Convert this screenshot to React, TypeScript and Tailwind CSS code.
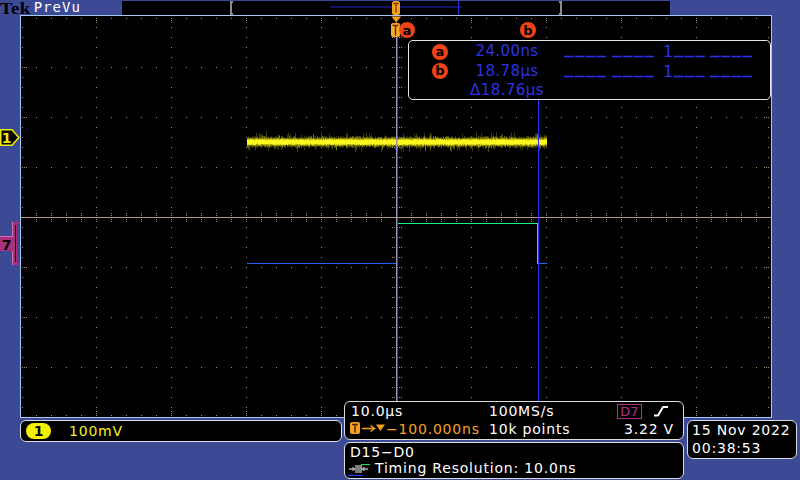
import React from 'react';

function lcg(seed: number) {
  let s = seed >>> 0;
  return () => {
    s = (Math.imul(s, 1664525) + 1013904223) >>> 0;
    return s / 4294967296;
  };
}

function buildGrid(): string {
  const parts: string[] = [];
  const dot = (x: number, y: number) => parts.push(`M${x} ${y}h1v1h-1z`);
  const majorCols = [96, 171, 246, 321, 471, 546, 621, 696];
  const majorRows = [67, 117, 167, 267, 317, 367];
  for (const x of majorCols) for (let y = 27; y <= 407; y += 10) dot(x, y);
  for (const y of majorRows) for (let x = 36; x <= 756; x += 15) dot(x, y);
  for (let x = 36; x <= 756; x += 15) {
    dot(x, 213);
    dot(x, 215);
    dot(x, 219);
    dot(x, 221);
  }
  for (let y = 27; y <= 407; y += 10) {
    dot(392, y);
    dot(394, y);
    dot(399, y);
    dot(401, y);
  }
  for (let y = 27; y <= 407; y += 10) {
    dot(22, y);
    dot(768, y);
  }
  for (const y of [...majorRows, 217]) {
    dot(24, y);
    dot(26, y);
    dot(766, y);
    dot(764, y);
  }
  for (let x = 36; x <= 756; x += 15) {
    dot(x, 18);
    dot(x, 415);
  }
  for (const x of [...majorCols, 396]) {
    dot(x, 20);
    dot(x, 22);
    dot(x, 413);
    dot(x, 411);
  }
  return parts.join('');
}

function buildNoise() {
  const r = lcg(7);
  let dim = '';
  let mid = '';
  let bright = '';
  for (let x = 247; x < 547; x += 0.5) {
    const u = 3 + r() * 3 + (r() < 0.15 ? r() * 5 : 0);
    const d = 3 + r() * 3 + (r() < 0.15 ? r() * 5 : 0);
    dim += `M${x} ${(142 - u).toFixed(1)}h0.5V${(142 + d).toFixed(1)}h-0.5z`;
    const mu = 2 + r() * 2;
    const md = 2 + r() * 2.2;
    mid += `M${x} ${(142 - mu).toFixed(1)}h0.5V${(142 + md).toFixed(1)}h-0.5z`;
  }
  for (let x = 247; x < 547; x += 1) {
    const bu = 1.6 + r() * 1.2;
    const bd = 1.6 + r() * 1.4;
    bright += `M${x} ${(142 - bu).toFixed(1)}h1V${(142 + bd).toFixed(1)}h-1z`;
  }
  return { dim, mid, bright };
}

const GRID_PATH = buildGrid();
const NOISE = buildNoise();

const BLUE_TXT = 'text-[#2b34e4]';

function Circ({ ch }: { ch: string }) {
  return (
    <span className="w-[16px] h-[16px] rounded-full bg-[#f04414] text-black font-bold text-[13px] leading-none flex items-center justify-center font-['DejaVu_Sans',sans-serif] pb-[1px]">
      {ch}
    </span>
  );
}

function Dashes({ one }: { one?: boolean }) {
  const u = 'inline-block -translate-y-[3px] font-bold';
  return (
    <div className={`flex ml-[9px] font-['DejaVu_Sans_Mono',monospace] text-[16px] tracking-[1.1px] ${BLUE_TXT}`}>
      <span className="w-[43px] inline-block">
        <span className={u}>____</span>
      </span>
      <span className="w-[43px] inline-block ml-[5px]">
        <span className={u}>____</span>
      </span>
      <span className="w-[43px] inline-block ml-[8px]">
        {one ? '1' : ''}
        <span className={u}>___</span>
      </span>
      <span className="w-[43px] inline-block ml-[4px]">
        <span className={u}>____</span>
      </span>
    </div>
  );
}

export default function App() {
  return (
    <div className="w-[800px] h-[480px] overflow-hidden bg-[#3c4a96] flex flex-col font-['DejaVu_Sans',sans-serif]">
      {/* top bar */}
      <div className="h-[15px] flex items-start shrink-0">
        <div className="w-[122px] flex items-start">
          <span className="inline-block origin-left scale-x-[1.1] font-['Liberation_Serif',serif] font-bold text-[17px] leading-[17px] tracking-[0.3px] text-black">
            Tek
          </span>
          <span className="ml-[6px] font-['DejaVu_Sans_Mono',monospace] text-[14px] leading-[15px] tracking-[1px] text-white">
            PreVu
          </span>
        </div>
        <div className="mt-[1px] w-[548px] h-[14px] bg-black">
          <svg width="548" height="14" viewBox="122 1 548 14" className="block">
            <path d="M233 2H231V14H233" stroke="#8c8c8c" strokeWidth="2" fill="none" />
            <path d="M559 2H561V14H559" stroke="#8c8c8c" strokeWidth="2" fill="none" />
            <rect x="330" y="6.5" width="132" height="1" fill="#2626c8" />
            <rect x="458" y="1" width="1" height="14" fill="#3030e0" />
            <rect x="392" y="1" width="8" height="14" rx="2.5" fill="#f6a01c" />
            <path d="M393.5 3.5h5M396 3.5v9" stroke="#7a3800" strokeWidth="1.3" />
          </svg>
        </div>
      </div>

      {/* middle */}
      <div className="flex h-[403px] shrink-0">
        <div className="w-[20px] h-[403px]">
          <svg width="20" height="403" viewBox="0 15 20 403" className="block">
            <path d="M0.75 129.75H12L18.8 137.5L12 145.25H0.75Z" fill="#000" stroke="#f0ec00" strokeWidth="1.5" />
            <text x="6.5" y="143" fontSize="14" fontWeight="bold" fill="#f0ec00" textAnchor="middle" fontFamily="DejaVu Sans">
              1
            </text>
            <rect x="12" y="222" width="5" height="43" fill="#a8307e" />
            <rect x="12" y="222" width="7" height="2" fill="#a8307e" />
            <rect x="12" y="263" width="7" height="2" fill="#a8307e" />
            <rect x="12" y="222" width="1" height="43" fill="#d070b0" />
            <rect x="15" y="225" width="1" height="37" fill="#000" />
            <rect x="0" y="236" width="13" height="15" fill="#a8307e" />
            <rect x="0" y="236" width="13" height="1" fill="#d070b0" />
            <text x="6.5" y="249.5" fontSize="14" fontWeight="bold" fill="#000" textAnchor="middle" fontFamily="DejaVu Sans">
              7
            </text>
          </svg>
        </div>

        <div className="relative w-[752px] h-[403px] border border-[#a6c8f6] bg-black">
          <svg width="750" height="401" viewBox="21 16 750 401" className="absolute inset-0 block">
            <path d={GRID_PATH} fill="#9a8c6a" />
            <rect x="21" y="217" width="750" height="1" fill="#a89c7c" />
            {/* yellow noisy trace */}
            <path d={NOISE.dim} fill="#807c08" />
            <path d={NOISE.mid} fill="#c8c410" />
            <path d={NOISE.bright} fill="#fcf820" />
            {/* digital trace */}
            <rect x="247" y="263" width="149" height="1" fill="#1a62ff" />
            <rect x="398" y="223" width="139" height="1" fill="#18f080" />
            <rect x="537" y="223" width="1" height="41" fill="#a0a0a0" />
            <rect x="538" y="263" width="9" height="1" fill="#1a62ff" />
            {/* cursors */}
            <rect x="396" y="37" width="1.5" height="380" fill="#9a92b8" />
            <rect x="538" y="99" width="1" height="318" fill="#2a2aff" />
            {/* top markers */}
            <path d="M391.5 16.5H401L396.2 22.5Z" fill="#f6a01c" />
            <rect x="391" y="23" width="9" height="14" rx="2" fill="#f8a828" />
            <path d="M392.5 25.5h6M395.5 25.5v10" stroke="#6a3000" strokeWidth="1.5" />
            <circle cx="407" cy="30" r="8" fill="#f04414" />
            <text x="407" y="34.5" fontSize="13" fontWeight="bold" fill="#000" textAnchor="middle" fontFamily="DejaVu Sans">
              a
            </text>
            <circle cx="528" cy="30" r="8" fill="#f04414" />
            <text x="528" y="34.5" fontSize="13" fontWeight="bold" fill="#000" textAnchor="middle" fontFamily="DejaVu Sans">
              b
            </text>
          </svg>

          {/* cursor readout */}
          <div className="absolute right-0 top-[24px] w-[363px] h-[60px] rounded-[5px] border border-[#e8e8e8] bg-black pl-[23px] pt-[1px] text-[15px] leading-[19.5px]">
            <div className="flex items-center h-[19.5px]">
              <Circ ch="a" />
              <span className={`w-[96px] ml-[11px] text-center tracking-[0.4px] ${BLUE_TXT}`}>24.00ns</span>
              <Dashes one />
            </div>
            <div className="flex items-center h-[19.5px]">
              <Circ ch="b" />
              <span className={`w-[96px] ml-[11px] text-center tracking-[0.4px] ${BLUE_TXT}`}>18.78µs</span>
              <Dashes one />
            </div>
            <div className="flex items-center h-[19.5px]">
              <span className="w-[16px]" />
              <span className={`w-[96px] ml-[11px] text-center tracking-[0.4px] ${BLUE_TXT}`}>Δ18.76µs</span>
            </div>
          </div>
        </div>
      </div>

      {/* bottom */}
      <div className="flex items-start relative z-10">
        <div className="ml-[20px] mt-[2px] w-[322px] h-[22px] rounded-[6px] border border-[#dcdcdc] bg-black flex items-center">
          <span className="ml-[5px] w-[25px] h-[16px] rounded-full bg-[#f4f000] text-black font-bold text-[14px] leading-none flex items-center justify-center">
            1
          </span>
          <span className="ml-[18px] text-[#f0f020] text-[14px] leading-[18px] tracking-[0.8px]">100mV</span>
        </div>

        <div className="ml-[2px] -mt-[17px] flex flex-col">
          <div className="w-[340px] h-[39px] rounded-[6px] border border-[#dcdcdc] bg-black pl-[6px] pr-[9px] text-white text-[14px] leading-[18px] tracking-[0.8px]">
            <div className="flex items-center h-[18px]">
              <span className="w-[138px]">10.0µs</span>
              <span>100MS/s</span>
              <div className="ml-auto flex items-center">
                <span className="w-[25px] h-[15px] border-[1.5px] border-[#b0308a] text-[#b0308a] text-[13px] leading-none tracking-normal flex items-center justify-center">
                  D7
                </span>
                <svg width="16" height="12" viewBox="0 0 16 12" className="ml-[11px] mr-[5px] block">
                  <path d="M1 10.5H5L10 2H15" stroke="#fff" strokeWidth="2" fill="none" strokeLinejoin="round" />
                </svg>
              </div>
            </div>
            <div className="flex items-center h-[18px]">
              <div className="w-[139px] -ml-[1px] flex items-center">
                <svg width="36" height="18" viewBox="0 0 36 18" className="block shrink-0">
                  <rect x="0" y="2" width="10" height="12" rx="2" fill="#f6a01c" />
                  <path d="M2 4.5h6M5 4.5v8" stroke="#5a2800" strokeWidth="1.6" />
                  <path d="M12 8.5H24" stroke="#f6a01c" strokeWidth="1.5" />
                  <path d="M20.5 5.5L24.5 8.5L20.5 11.5" stroke="#f6a01c" strokeWidth="1.5" fill="none" />
                  <path d="M26 4.5H35L30.5 11Z" fill="#f6a01c" />
                </svg>
                <span className="text-[#f8a420]">−100.000ns</span>
              </div>
              <span>10k points</span>
              <span className="ml-auto">3.22 V</span>
            </div>
          </div>
          <div className="w-[340px] h-[37px] mt-[2px] rounded-[6px] border border-[#dcdcdc] bg-black pl-[3px] pt-[1px] text-white text-[14px] leading-[16px] tracking-[0.8px]">
            <div className="pl-[2px] h-[16px]">D15−D0</div>
            <div className="flex items-center h-[16px]">
              <svg width="22" height="16" viewBox="0 0 22 16" className="block shrink-0">
                <rect x="7" y="5" width="7" height="8" fill="#7c7c7c" />
                <path d="M13.5 11V4.5H22" stroke="#20e060" strokeWidth="1.2" fill="none" />
                <path d="M0 15.5H15" stroke="#2040ff" strokeWidth="1.2" />
                <path d="M1 9H6.5M4.5 7L6.5 9L4.5 11" stroke="#fff" strokeWidth="1" fill="none" />
                <path d="M20 9H14.5M16.5 7L14.5 9L16.5 11" stroke="#fff" strokeWidth="1" fill="none" />
              </svg>
              <span className="ml-[5px]">Timing Resolution: 10.0ns</span>
            </div>
          </div>
        </div>

        <div className="ml-[3px] mt-[2px] w-[110px] h-[39px] rounded-[6px] border border-[#dcdcdc] bg-black pl-[4px] text-white text-[14px] leading-[18px] tracking-[0.8px]">
          <div>15 Nov 2022</div>
          <div>00:38:53</div>
        </div>
      </div>
    </div>
  );
}
